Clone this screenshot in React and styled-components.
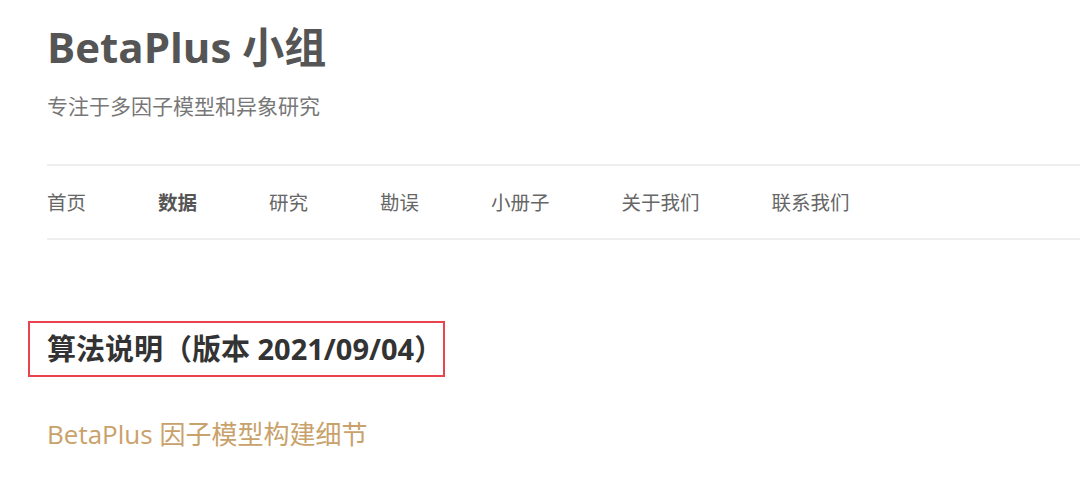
import React from "react";
import styled, { createGlobalStyle } from "styled-components";

const GlobalStyle = createGlobalStyle`
  html, body {
    margin: 0;
    padding: 0;
    background: #fff;
    overflow: hidden;
  }
  body {
    font-family: "Open Sans", "Noto Sans CJK SC", sans-serif;
  }
`;

const Page = styled.div`
  width: 1080px;
  height: 482px;
  padding-left: 47px;
  box-sizing: border-box;
`;

const Header = styled.header`
  padding-top: 24px;
`;

const SiteTitle = styled.h1`
  margin: 0;
  font-size: 42px;
  line-height: 46px;
  font-weight: 700;
  color: #555;
`;

const Tagline = styled.p`
  margin: 22px 0 0;
  font-size: 21px;
  line-height: 28px;
  color: #777;
`;

const Nav = styled.nav`
  margin-top: 44px;
  border-top: 2px solid #eee;
  border-bottom: 2px solid #eee;
  height: 72px;
  display: flex;
  align-items: center;
  gap: 72px;
`;

const NavItem = styled.a`
  font-size: 19.5px;
  line-height: 28px;
  padding-top: 2px;
  color: ${({ $active }) => ($active ? "#555" : "#666")};
  font-weight: ${({ $active }) => ($active ? 700 : 400)};
  text-decoration: none;
`;

const Main = styled.main`
  padding-top: 81px;
`;

const HeadingBox = styled.div`
  display: inline-block;
  margin-left: -19px;
  padding: 9px 0 9px 17px;
  border: 2px solid #e9434d;
`;

const Heading = styled.h2`
  margin: 0;
  font-size: 29px;
  line-height: 34px;
  font-weight: 700;
  color: #333;
`;

const ArticleLink = styled.a`
  display: block;
  margin-top: 39px;
  font-size: 26px;
  line-height: 36px;
  color: #c9a26b;
  text-decoration: none;
`;

const navItems = ["首页", "数据", "研究", "勘误", "小册子", "关于我们", "联系我们"];

export default function App() {
  return (
    <>
      <GlobalStyle />
      <Page>
        <Header>
          <SiteTitle>BetaPlus 小组</SiteTitle>
          <Tagline>专注于多因子模型和异象研究</Tagline>
        </Header>
        <Nav>
          {navItems.map((item) => (
            <NavItem key={item} $active={item === "数据"}>
              {item}
            </NavItem>
          ))}
        </Nav>
        <Main>
          <HeadingBox>
            <Heading>算法说明（版本 2021/09/04）</Heading>
          </HeadingBox>
          <ArticleLink>BetaPlus 因子模型构建细节</ArticleLink>
        </Main>
      </Page>
    </>
  );
}
